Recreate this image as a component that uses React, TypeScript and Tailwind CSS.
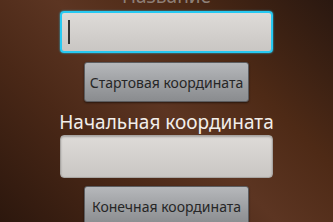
export default function App() {
  return (
    <div
      className="relative h-[222px] w-[333px] overflow-hidden bg-[linear-gradient(45deg,#2c170d_0%,#4a2817_30%,#5c3522_50%,#4e2a16_70%,#2a1810_100%)]"
      style={{ fontFamily: '"Noto Sans", "Open Sans", sans-serif' }}
    >
      <div className="flex flex-col items-center pt-0">
        {/* Title label, partly scrolled out */}
        <div className="-mt-[16px] h-[24px] text-[19px] leading-[24px] text-[#8e7f76]">Название</div>

        <div className="mt-[3px] flex h-[42px] w-[213px] items-center rounded-[4px] border-2 border-[#27c9f2] bg-[linear-gradient(#dedbd8,#c9c6c3)] px-[6px] shadow-[0_0_2px_#27c9f2]">
          <div className="h-[24px] w-[1.5px] bg-[#333]" />
        </div>

        <button className="mt-[9px] h-[40px] w-[165px] rounded-[3px] border border-[#5c5d60] bg-[linear-gradient(#b6b8bb,#9a9c9f_60%,#8a8c8f)] text-[14px] text-[#262626] shadow-[0_1px_2px_rgba(0,0,0,0.5)]">
          Стартовая координата
        </button>

        <div className="mt-[8px] h-[24px] text-[19px] leading-[24px] text-[#f2eeea]">Начальная координата</div>

        <div className="mt-[1px] h-[43px] w-[213px] rounded-[4px] border border-[#a8a5a2] bg-[linear-gradient(#dedbd8,#c9c6c3)] shadow-[inset_0_1px_2px_rgba(0,0,0,0.25)]" />

        <button className="mt-[8px] h-[40px] w-[165px] rounded-[3px] border border-[#5c5d60] bg-[linear-gradient(#b6b8bb,#9a9c9f_60%,#8a8c8f)] text-[14px] text-[#262626] shadow-[0_1px_2px_rgba(0,0,0,0.5)]">
          Конечная координата
        </button>
      </div>
    </div>
  )
}
